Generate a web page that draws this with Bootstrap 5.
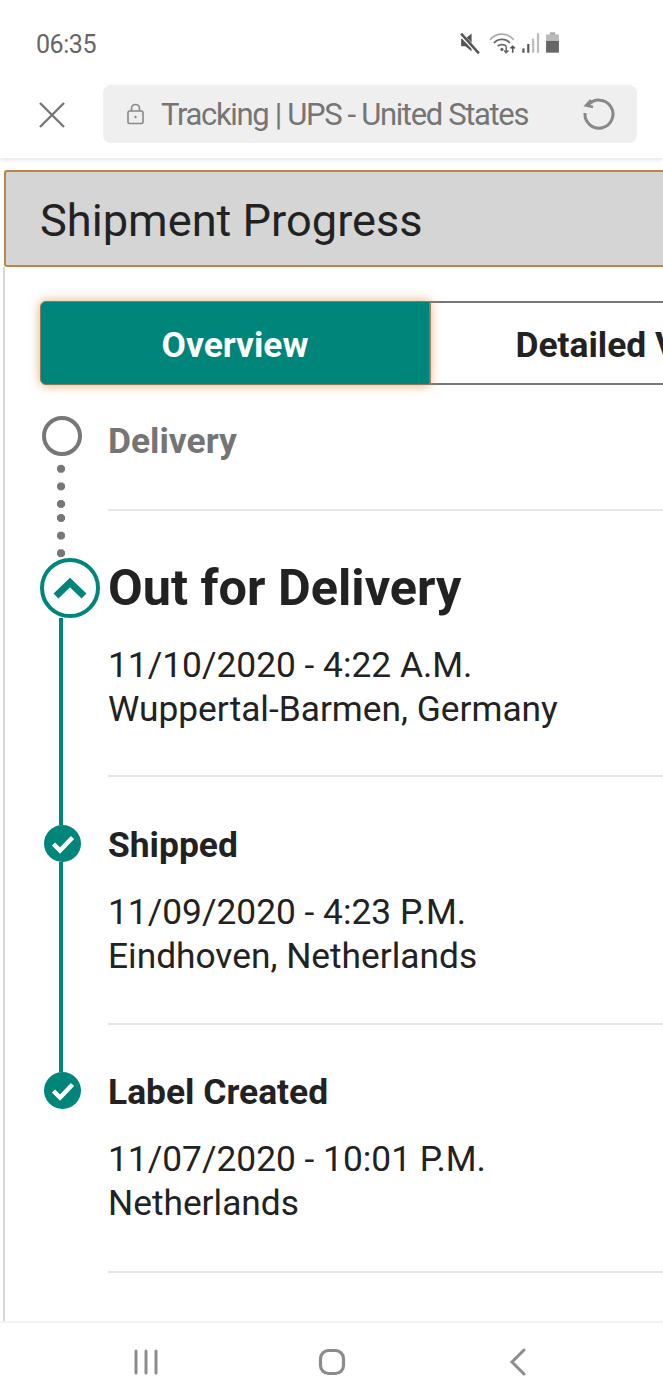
<!DOCTYPE html>
<html lang="en">
<head>
  <meta charset="UTF-8" />
  <meta name="viewport" content="width=device-width, initial-scale=1" />
  <title>Tracking | UPS - United States</title>
  <link href="https://cdn.jsdelivr.net/npm/bootstrap@5.3.0/dist/css/bootstrap.min.css" rel="stylesheet" />
  <style>
    html, body {
      height: 1400px;
      overflow: hidden;
    }
    body {
      font-family: Roboto, "Liberation Sans", sans-serif;
      color: #222;
      background-color: #fff;
    }
    .screen { height: 1400px; }

    /* phone chrome */
    .status-bar {
      height: 85px;
      padding: 0 103px 0 36px;
      color: #666;
    }
    .status-time {
      font-size: 25px;
      letter-spacing: -0.45px;
      line-height: 1;
      margin-top: 3px;
    }
    .browser-bar {
      height: 73px;
      padding: 0 26px 0 38px;
      box-shadow: 0 2px 4px rgba(0, 0, 0, 0.1);
    }
    .address-box {
      width: 534px;
      height: 58px;
      margin-left: 37px;
      padding: 0 22px 0 24px;
      background-color: #efefef;
      border-radius: 8px;
      color: #757575;
    }
    .address-text {
      font-size: 31px;
      letter-spacing: -1.35px;
      margin: 3px 0 0 17px;
    }

    /* page */
    .page-shell {
      height: 1163px;
      overflow: hidden;
    }
    .progress-head {
      height: 97px;
      margin: 12px 0 0 4px;
      padding: 6px 0 0 34px;
      background-color: #d5d5d5;
      border: 2px solid #bf8546;
      border-right: 0;
      border-radius: 3px 0 0 3px;
      font-size: 45.2px;
      font-weight: 400;
    }
    .page-body {
      height: 1054px;
      margin-left: 3px;
      border-left: 2px solid #d8d8d8;
      overflow: hidden;
    }
    .view-tabs {
      width: 800px;
      margin: 34px 0 0 35px;
    }
    .view-tabs .btn {
      height: 84px;
      width: 390px;
      flex: none;
      font-size: 35.4px;
      font-weight: 700;
      padding: 5px 0 0;
      --bs-btn-border-radius: 6px;
    }
    .tab-on, .tab-on:hover {
      position: relative;
      z-index: 1;
      background-color: #00857a;
      color: #fff;
      border: 1px solid #8a7a60;
      box-shadow: 0 0 11px rgba(222, 146, 80, 0.8);
    }
    .tab-off, .tab-off:hover {
      background-color: #fff;
      color: #222;
      border: 2px solid #777;
    }

    /* timeline */
    .time-line { margin-top: 31px; }
    .rail {
      width: 103px;
      padding-left: 36px;
      flex: none;
    }
    .rail-line {
      width: 4px;
      margin-left: 18px;
      background-color: #00857a;
    }
    .rail-dots {
      width: 8px;
      margin-left: 16px;
      background-image: radial-gradient(circle, #777 3.8px, transparent 4.4px);
      background-size: 8px 17.6px;
    }
    .ring-todo {
      width: 40px;
      height: 40px;
      margin-left: 1px;
      border: 4px solid #777;
      border-radius: 50%;
    }
    .ring-now {
      width: 60px;
      height: 60px;
      margin-left: -1px;
      border: 4.5px solid #00857a;
      border-radius: 50%;
      background-color: #fff;
    }
    .dot-done {
      width: 37px;
      height: 37px;
      margin-left: 3px;
      border-radius: 50%;
      background-color: #00857a;
    }
    .step-body {
      border-bottom: 2px solid #e6e6e6;
    }
    .step-title {
      font-size: 35.4px;
      font-weight: 700;
      line-height: 44px;
      margin: 0;
    }
    .step-big {
      font-size: 50.4px;
      line-height: 60px;
    }
    .step-info {
      font-size: 35.3px;
      line-height: 43.5px;
    }

    /* android nav */
    .nav-keys {
      height: 79px;
      border-top: 2px solid #f3f3f3;
    }
    .nav-key { width: 186px; }
  </style>
</head>
<body>

<div class="screen d-flex flex-column">

  <div class="status-bar d-flex align-items-center justify-content-between">
    <span class="status-time">06:35</span>
    <div class="d-flex align-items-center gap-1">
      <svg class="me-1" width="23" height="26" viewBox="0 0 22 24">
        <path d="M3 8h4l6-5v17l-6-5H3z" fill="#555" />
        <path d="M2 3l18 19" stroke="#fff" stroke-width="4" />
        <path d="M3 3l17 19" stroke="#555" stroke-width="2.4" />
      </svg>
      <svg width="28" height="26" viewBox="0 0 26 24" fill="none">
        <path d="M1 9c6-7 16-7 22 0" stroke="#aaa" stroke-width="1.6" />
        <path d="M4.5 12c4-4.500 11-4.500 15 0" stroke="#666" stroke-width="1.6" />
        <path d="M8 15c2-2 6-2 8 0" stroke="#666" stroke-width="1.6" />
        <circle cx="12" cy="18" r="1.500" fill="#666" />
        <path d="M16 15v6m-2-2l2 2 2-2" stroke="#666" stroke-width="1.400" />
        <path d="M22 21v-6m-2 2l2-2 2 2" stroke="#555" stroke-width="1.400" />
      </svg>
      <svg width="20" height="26" viewBox="0 0 18 24">
        <rect x="1" y="17" width="2" height="4" fill="#555" />
        <rect x="5.500" y="13" width="2" height="8" fill="#555" />
        <rect x="10" y="8" width="2" height="13" fill="#bbb" />
        <rect x="14.500" y="3" width="2" height="18" fill="#bbb" />
      </svg>
      <svg width="15" height="26" viewBox="0 0 14 24">
        <rect x="4.500" y="2" width="5" height="3" fill="#aaa" />
        <rect x="1" y="4" width="12" height="6" fill="#bbb" />
        <rect x="1" y="10" width="12" height="11" fill="#666" />
      </svg>
    </div>
  </div>

  <div class="browser-bar d-flex align-items-start">
    <svg class="mt-3" width="28" height="28" viewBox="0 0 28 28" fill="none" stroke="#777" stroke-width="2.4">
      <path d="M2 2l24 24M26 2L2 26" />
    </svg>
    <div class="address-box d-flex align-items-center">
      <svg width="17" height="22" viewBox="0 0 17 22" fill="none" stroke="#888" stroke-width="1.600">
        <rect x="1" y="8" width="15" height="12.500" rx="1.500" />
        <path d="M4.500 8V5.500a4 4 0 0 1 8 0V8" />
        <circle cx="8.500" cy="14" r="1.200" fill="#888" stroke="none" />
      </svg>
      <span class="address-text flex-grow-1">Tracking | UPS - United States</span>
      <svg width="32" height="32" viewBox="0 0 32 32" fill="none" stroke="#888" stroke-width="3">
        <path d="M5 7.400A14 14 0 1 1 2 15" />
        <path d="M8 2L3 7.500l7 1.500" stroke-width="2.600" />
      </svg>
    </div>
  </div>

  <div class="page-shell">
    <h1 class="progress-head d-flex align-items-center">Shipment Progress</h1>

    <div class="page-body">
      <div class="view-tabs btn-group d-flex" role="group">
        <button type="button" class="btn tab-on">Overview</button>
        <button type="button" class="btn tab-off">Detailed View</button>
      </div>

      <div class="time-line">
        <div class="d-flex">
          <div class="rail d-flex flex-column">
            <div class="ring-todo flex-shrink-0"></div>
            <div class="rail-dots flex-grow-1 mt-1"></div>
          </div>
          <div class="step-body flex-grow-1" style="padding: 3px 0 46px">
            <h2 class="step-title" style="color: #757575">Delivery</h2>
          </div>
        </div>

        <div class="d-flex">
          <div class="rail d-flex flex-column">
            <div class="rail-dots flex-shrink-0" style="height: 47px; background-position: 0 -1.8px"></div>
            <div class="ring-now flex-shrink-0 d-flex align-items-center justify-content-center">
              <svg width="34" height="24" viewBox="0 0 34 24" fill="none" stroke="#00857a" stroke-width="7">
                <path d="M3 20L17 6.500 31 20" />
              </svg>
            </div>
            <div class="rail-line flex-grow-1"></div>
          </div>
          <div class="step-body flex-grow-1" style="padding: 47px 0 44px">
            <h2 class="step-title step-big">Out for Delivery</h2>
            <div class="step-info" style="margin-top: 26px">11/10/2020 - 4:22 A.M.<br />Wuppertal-Barmen, Germany</div>
          </div>
        </div>

        <div class="d-flex">
          <div class="rail d-flex flex-column">
            <div class="rail-line flex-shrink-0" style="height: 48px"></div>
            <div class="dot-done flex-shrink-0 d-flex align-items-center justify-content-center">
              <svg width="24" height="20" viewBox="0 0 24 20" fill="none" stroke="#fff" stroke-width="4.500">
                <path d="M2.500 10l6.500 6.500L21.500 3.500" />
              </svg>
            </div>
            <div class="rail-line flex-grow-1"></div>
          </div>
          <div class="step-body flex-grow-1" style="padding: 46px 0 45px">
            <h2 class="step-title">Shipped</h2>
            <div class="step-info" style="margin-top: 24px">11/09/2020 - 4:23 P.M.<br />Eindhoven, Netherlands</div>
          </div>
        </div>

        <div class="d-flex">
          <div class="rail d-flex flex-column">
            <div class="rail-line flex-shrink-0" style="height: 47px"></div>
            <div class="dot-done flex-shrink-0 d-flex align-items-center justify-content-center">
              <svg width="24" height="20" viewBox="0 0 24 20" fill="none" stroke="#fff" stroke-width="4.500">
                <path d="M2.500 10l6.500 6.500L21.500 3.500" />
              </svg>
            </div>
          </div>
          <div class="step-body flex-grow-1" style="padding: 45px 0 46px">
            <h2 class="step-title">Label Created</h2>
            <div class="step-info" style="margin-top: 24px">11/07/2020 - 10:01 P.M.<br />Netherlands</div>
          </div>
        </div>
      </div>
    </div>
  </div>

  <div class="nav-keys d-flex justify-content-center align-items-center">
    <div class="nav-key d-flex justify-content-center">
      <svg width="26" height="26" viewBox="0 0 26 26" fill="none" stroke="#8c8c8c" stroke-width="3" stroke-linecap="round">
        <path d="M3 2v22M13 2v22M23 2v22" />
      </svg>
    </div>
    <div class="nav-key d-flex justify-content-center">
      <svg width="28" height="28" viewBox="0 0 28 28" fill="none" stroke="#8c8c8c" stroke-width="3.200">
        <rect x="2.500" y="2.500" width="23" height="23" rx="8" />
      </svg>
    </div>
    <div class="nav-key d-flex justify-content-center">
      <svg width="18" height="28" viewBox="0 0 18 28" fill="none" stroke="#8c8c8c" stroke-width="3" stroke-linecap="round">
        <path d="M15 2L3 14l12 12" />
      </svg>
    </div>
  </div>

</div>

</body>
</html>
